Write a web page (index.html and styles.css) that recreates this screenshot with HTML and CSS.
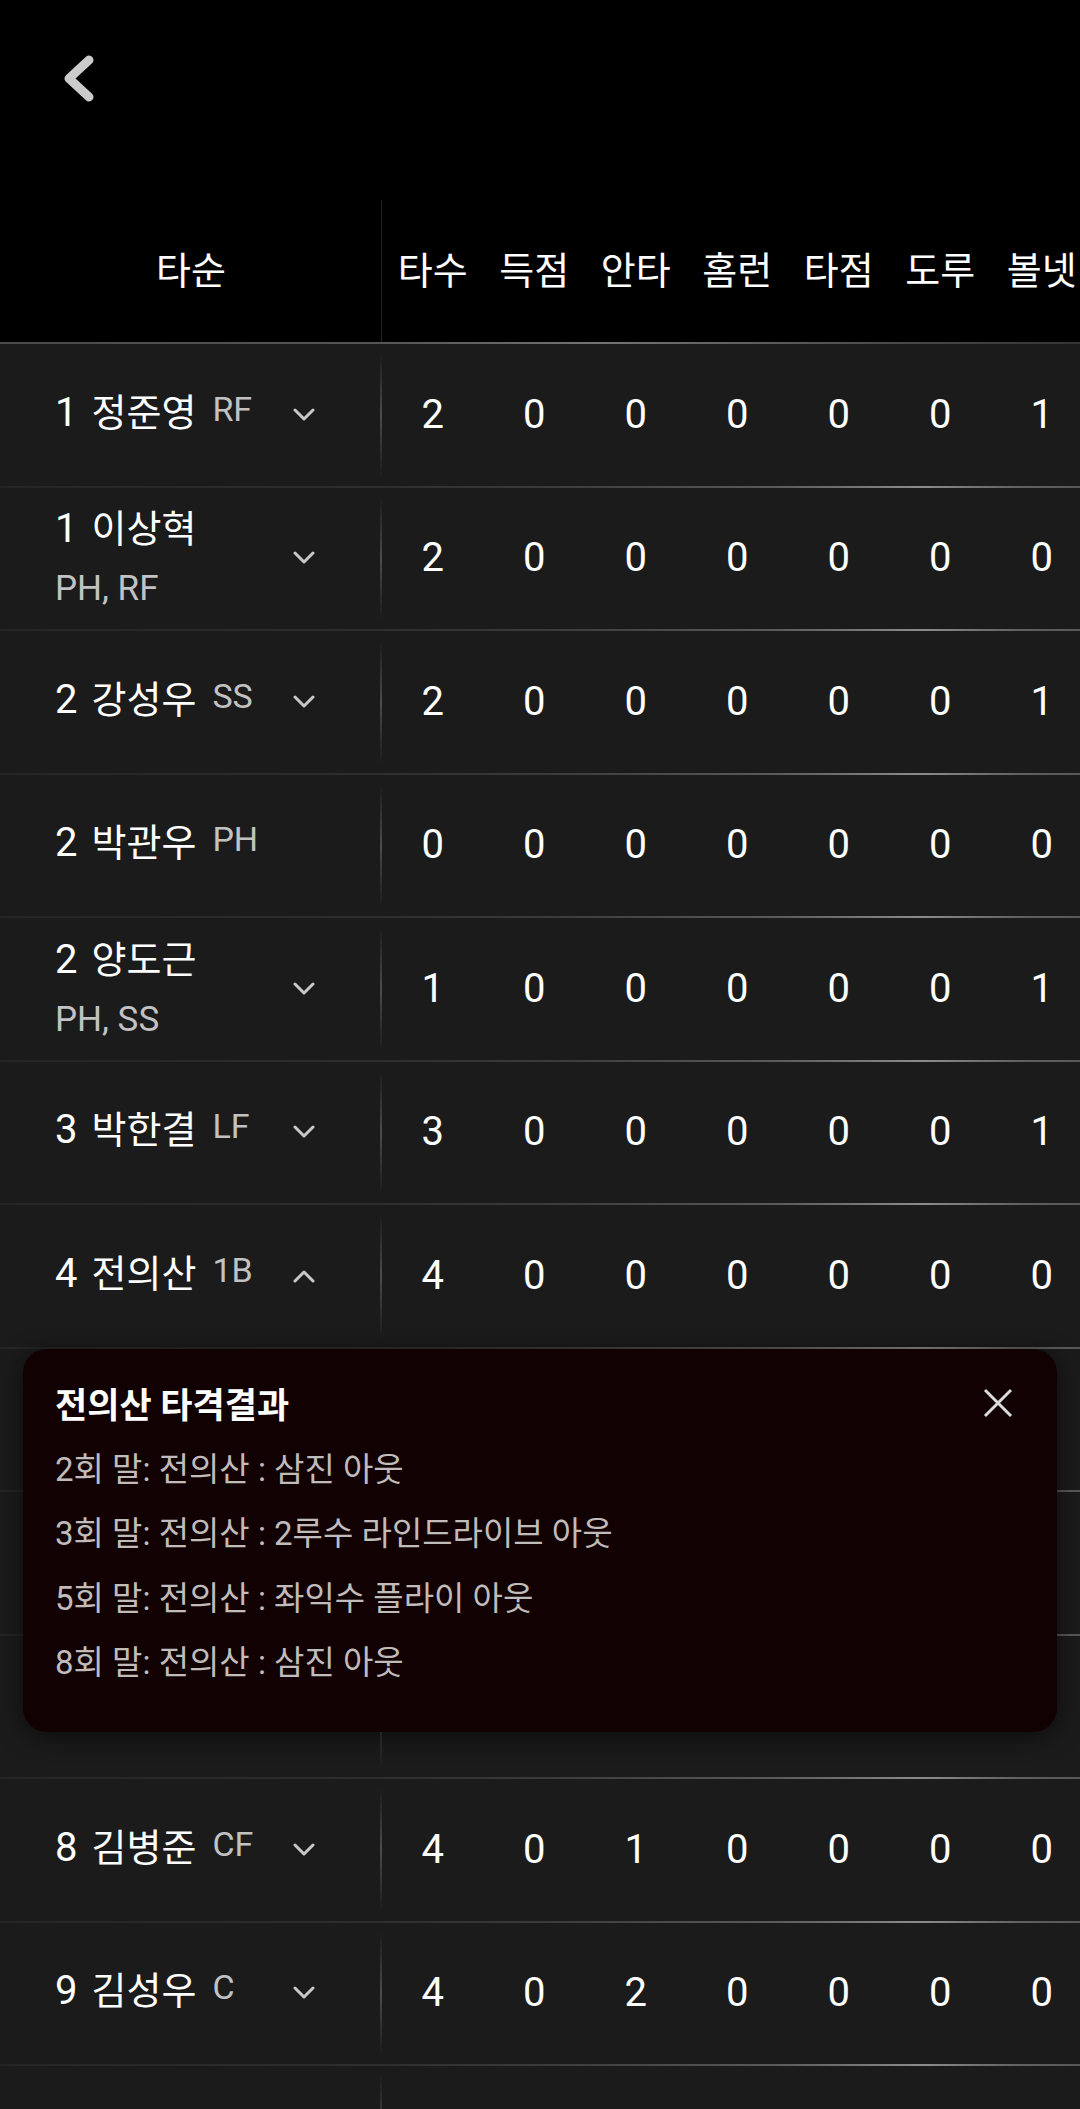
FILE: index.html
```html
<!DOCTYPE html>
<html lang="ko">
<head>
    <meta charset="UTF-8">
    <meta name="viewport" content="width=device-width, initial-scale=1.0">
    <title>타격 기록</title>
    <link rel="stylesheet" href="styles.css">
</head>
<body>
    <div class="screen">
        <header class="topbar">
            <button class="back" aria-label="뒤로">
                <svg width="38" height="54" viewBox="0 0 38 54"><polyline points="29,8 9,26.5 29,45" /></svg>
            </button>
        </header>

        <div class="board">
            <div class="row head">
                <div class="lead">타순</div>
                <div class="stats">
                    <span>타수</span><span>득점</span><span>안타</span><span>홈런</span><span>타점</span><span>도루</span><span>볼넷</span>
                </div>
            </div>

            <div class="row">
                <div class="lead">
                    <div class="player">
                        <div class="line"><span class="order">1</span><span class="name">정준영</span><span class="pos">RF</span></div>
                    </div>
                    <svg class="toggle" viewBox="0 0 22 14"><polyline points="2,2 11,11 20,2" /></svg>
                </div>
                <div class="stats"><span>2</span><span>0</span><span>0</span><span>0</span><span>0</span><span>0</span><span>1</span></div>
            </div>

            <div class="row">
                <div class="lead">
                    <div class="player">
                        <div class="line"><span class="order">1</span><span class="name">이상혁</span></div>
                        <div class="sub">PH, RF</div>
                    </div>
                    <svg class="toggle" viewBox="0 0 22 14"><polyline points="2,2 11,11 20,2" /></svg>
                </div>
                <div class="stats"><span>2</span><span>0</span><span>0</span><span>0</span><span>0</span><span>0</span><span>0</span></div>
            </div>

            <div class="row">
                <div class="lead">
                    <div class="player">
                        <div class="line"><span class="order">2</span><span class="name">강성우</span><span class="pos">SS</span></div>
                    </div>
                    <svg class="toggle" viewBox="0 0 22 14"><polyline points="2,2 11,11 20,2" /></svg>
                </div>
                <div class="stats"><span>2</span><span>0</span><span>0</span><span>0</span><span>0</span><span>0</span><span>1</span></div>
            </div>

            <div class="row">
                <div class="lead">
                    <div class="player">
                        <div class="line"><span class="order">2</span><span class="name">박관우</span><span class="pos">PH</span></div>
                    </div>
                </div>
                <div class="stats"><span>0</span><span>0</span><span>0</span><span>0</span><span>0</span><span>0</span><span>0</span></div>
            </div>

            <div class="row">
                <div class="lead">
                    <div class="player">
                        <div class="line"><span class="order">2</span><span class="name">양도근</span></div>
                        <div class="sub">PH, SS</div>
                    </div>
                    <svg class="toggle" viewBox="0 0 22 14"><polyline points="2,2 11,11 20,2" /></svg>
                </div>
                <div class="stats"><span>1</span><span>0</span><span>0</span><span>0</span><span>0</span><span>0</span><span>1</span></div>
            </div>

            <div class="row">
                <div class="lead">
                    <div class="player">
                        <div class="line"><span class="order">3</span><span class="name">박한결</span><span class="pos">LF</span></div>
                    </div>
                    <svg class="toggle" viewBox="0 0 22 14"><polyline points="2,2 11,11 20,2" /></svg>
                </div>
                <div class="stats"><span>3</span><span>0</span><span>0</span><span>0</span><span>0</span><span>0</span><span>1</span></div>
            </div>

            <div class="row open">
                <div class="lead">
                    <div class="player">
                        <div class="line"><span class="order">4</span><span class="name">전의산</span><span class="pos">1B</span></div>
                    </div>
                    <svg class="toggle" viewBox="0 0 22 14"><polyline points="2,12 11,3 20,12" /></svg>
                </div>
                <div class="stats"><span>4</span><span>0</span><span>0</span><span>0</span><span>0</span><span>0</span><span>0</span></div>

                <div class="popup">
                    <div class="popup-head">
                        <h3 class="popup-title">전의산 타격결과</h3>
                        <button class="close" aria-label="닫기">
                            <svg width="30" height="30" viewBox="0 0 30 30"><path d="M2 2 L28 28 M28 2 L2 28" /></svg>
                        </button>
                    </div>
                    <ul class="results">
                        <li>2회 말: 전의산 : 삼진 아웃</li>
                        <li>3회 말: 전의산 : 2루수 라인드라이브 아웃</li>
                        <li>5회 말: 전의산 : 좌익수 플라이 아웃</li>
                        <li>8회 말: 전의산 : 삼진 아웃</li>
                    </ul>
                </div>
            </div>

            <!-- rows under the popup -->
            <div class="row"><div class="lead"></div><div class="stats"></div></div>
            <div class="row"><div class="lead"></div><div class="stats"></div></div>
            <div class="row"><div class="lead"></div><div class="stats"></div></div>

            <div class="row">
                <div class="lead">
                    <div class="player">
                        <div class="line"><span class="order">8</span><span class="name">김병준</span><span class="pos">CF</span></div>
                    </div>
                    <svg class="toggle" viewBox="0 0 22 14"><polyline points="2,2 11,11 20,2" /></svg>
                </div>
                <div class="stats"><span>4</span><span>0</span><span>1</span><span>0</span><span>0</span><span>0</span><span>0</span></div>
            </div>

            <div class="row">
                <div class="lead">
                    <div class="player">
                        <div class="line"><span class="order">9</span><span class="name">김성우</span><span class="pos">C</span></div>
                    </div>
                    <svg class="toggle" viewBox="0 0 22 14"><polyline points="2,2 11,11 20,2" /></svg>
                </div>
                <div class="stats"><span>4</span><span>0</span><span>2</span><span>0</span><span>0</span><span>0</span><span>0</span></div>
            </div>

            <div class="row"><div class="lead"></div><div class="stats"></div></div>
        </div>
    </div>
</body>
</html>
```

FILE: styles.css
```css
body {
    margin: 0;
    background-color: #1b1b1b;
    font-family: Roboto, "Noto Sans CJK KR", sans-serif;
    color: #fff;
}

.screen {
    width: 1080px;
    overflow: hidden;
}

/* top bar */
.topbar {
    height: 200px;
    box-sizing: border-box;
    padding: 52px 0 0 60px;
    background-color: #000;
}

.back {
    display: block;
    padding: 0;
    border: 0;
    background: none;
    width: 38px;
    height: 54px;
}

.back svg {
    display: block;
    fill: none;
    stroke: #cbcbcb;
    stroke-width: 9;
    stroke-linecap: round;
    stroke-linejoin: round;
}

/* table */
.row {
    display: flex;
    width: 1092.5px;
    height: 143.5px;
}

.lead {
    flex: 0 0 382px;
    box-sizing: border-box;
    display: flex;
    align-items: center;
    padding: 0 67px 2px 55px;
    background:
        linear-gradient(to bottom, rgba(90, 90, 90, 0) 6%, #4c4c4c 50%, rgba(90, 90, 90, 0) 94%) right top / 2px calc(100% - 2px) no-repeat,
        linear-gradient(to right, rgba(60, 60, 60, 0.3), #2e2e2e) left bottom / 100% 2px no-repeat;
}

.stats {
    flex: 0 0 710.5px;
    box-sizing: border-box;
    display: flex;
    align-items: center;
    padding-bottom: 2px;
    background: linear-gradient(to right, #2e2e2e 0%, #3c3c3c 25%, #5a5a5a 55%, #8c8c8c 76%, #606060 90%, #565656 100%) left bottom / 100% 2px no-repeat;
}

.stats span {
    flex: 0 0 101.5px;
    text-align: center;
    font-size: 40px;
    line-height: 48px;
}

.row.head {
    height: 144px;
    background:
        linear-gradient(to right, #4a4a4a 0%, #555 35%, #747474 55%, #4c4c4c 80%, #333 100%) left bottom / 100% 2px no-repeat,
        #000;
}

.head .lead {
    justify-content: center;
    padding: 0 0 2px;
    font-size: 38px;
    line-height: 48px;
    background: linear-gradient(#222, #222) right top / 1px calc(100% - 2px) no-repeat;
}

.head .stats {
    background: none;
}

.head .stats span {
    font-size: 38px;
}

/* player cell */
.player {
    flex: 1;
}

.line {
    white-space: nowrap;
    line-height: 48px;
}

.order {
    font-size: 40px;
    margin-right: 14px;
}

.name {
    font-size: 38px;
}

.pos {
    font-size: 34px;
    color: #c2c2c2;
    margin-left: 16px;
    vertical-align: 5px;
}

.sub {
    font-size: 35px;
    line-height: 44px;
    margin-top: 6px;
    color: #c2c2c2;
}

.toggle {
    flex: none;
    width: 22px;
    height: 14px;
    fill: none;
    stroke: #c8c8c8;
    stroke-width: 3;
    stroke-linecap: round;
    stroke-linejoin: round;
}

/* result popup */
.row.open {
    position: relative;
}

.popup {
    position: absolute;
    top: 100%;
    left: 23px;
    z-index: 2;
    width: 1034px;
    box-sizing: border-box;
    padding: 30px 44px 36px 32px;
    background-color: #120102;
    border-radius: 24px;
    box-shadow: 0 4px 24px rgba(0, 0, 0, 0.6);
}

.popup-head {
    display: flex;
    align-items: center;
    justify-content: space-between;
    height: 48px;
}

.popup-title {
    margin: 0;
    font-size: 35px;
    font-weight: 700;
}

.close {
    padding: 0;
    border: 0;
    background: none;
    width: 30px;
    height: 30px;
}

.close svg {
    display: block;
    stroke: #dcdcdc;
    stroke-width: 3;
}

.results {
    list-style: none;
    margin: 11px 0 0;
    padding: 0;
}

.results li {
    font-size: 33px;
    line-height: 64.6px;
    color: #c0bcbc;
}
```
